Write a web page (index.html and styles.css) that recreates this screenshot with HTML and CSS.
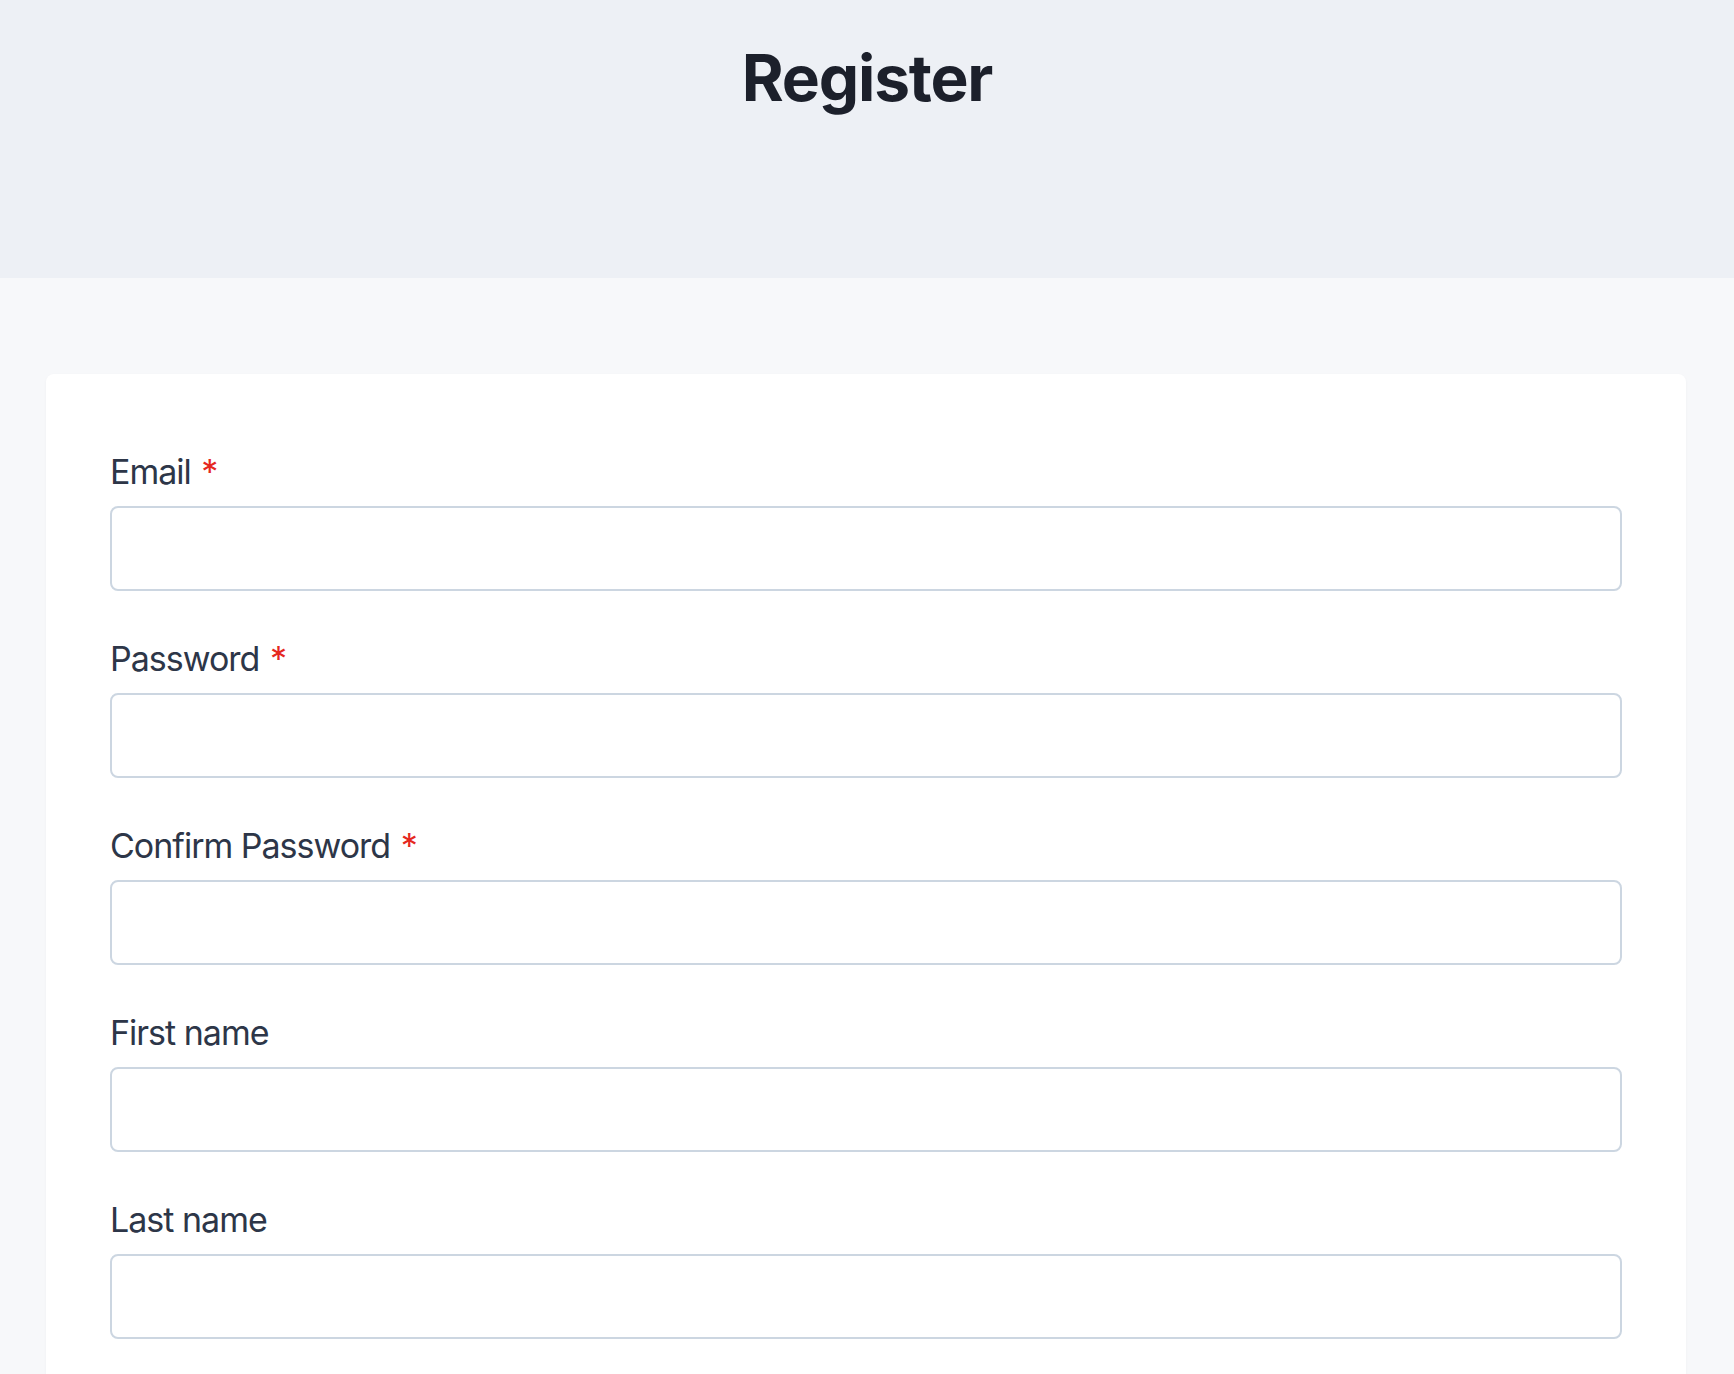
FILE: index.html
```html
<!DOCTYPE html>
<html lang="en">
<head>
<meta charset="utf-8">
<title>Register</title>
<link rel="stylesheet" href="styles.css">
</head>
<body>
<header class="page-header">
  <h1 class="page-title">Register</h1>
</header>
<main class="page-main">
  <form class="card">
    <div class="field">
      <label class="field-label">Email <span class="req">*</span></label>
      <input class="field-input" type="email">
    </div>
    <div class="field">
      <label class="field-label">Password <span class="req">*</span></label>
      <input class="field-input" type="password">
    </div>
    <div class="field">
      <label class="field-label">Confirm Password <span class="req">*</span></label>
      <input class="field-input" type="password">
    </div>
    <div class="field">
      <label class="field-label">First name</label>
      <input class="field-input" type="text">
    </div>
    <div class="field">
      <label class="field-label">Last name</label>
      <input class="field-input" type="text">
    </div>
  </form>
</main>
</body>
</html>
```
FILE: styles.css
```css
* { box-sizing: border-box; }
html, body { margin: 0; padding: 0; }
body {
  font-family: Inter, "Noto Sans", "Liberation Sans", sans-serif;
  background: #f7f8fa;
  color: #2d3648;
  height: 1374px;
  overflow: hidden;
}
.page-header {
  background: #edf0f5;
  height: 278px;
  padding-top: 46px;
  text-align: center;
}
.page-title {
  margin: 0;
  font-size: 64px;
  line-height: 64px;
  font-weight: 700;
  color: #1c202b;
  letter-spacing: -1.2px;
}
.page-main {
  padding: 96px 48px 0 46px;
}
.card {
  background: #ffffff;
  border-radius: 8px;
  padding: 74px 64px 64px;
  display: flex;
  flex-direction: column;
  gap: 44px;
  box-shadow: 0 1px 3px rgba(30, 40, 60, 0.04);
}
.field {
  display: flex;
  flex-direction: column;
}
.field-label {
  font-size: 34px;
  line-height: 48px;
  margin-bottom: 10px;
  color: #2d3648;
  letter-spacing: -1px;
}
.req {
  color: #e5281f;
  margin-left: 2px;
}
.field-input {
  height: 85px;
  width: 100%;
  border: 2px solid #ccd6e1;
  border-radius: 8px;
  background: #fff;
  font: inherit;
}
```
